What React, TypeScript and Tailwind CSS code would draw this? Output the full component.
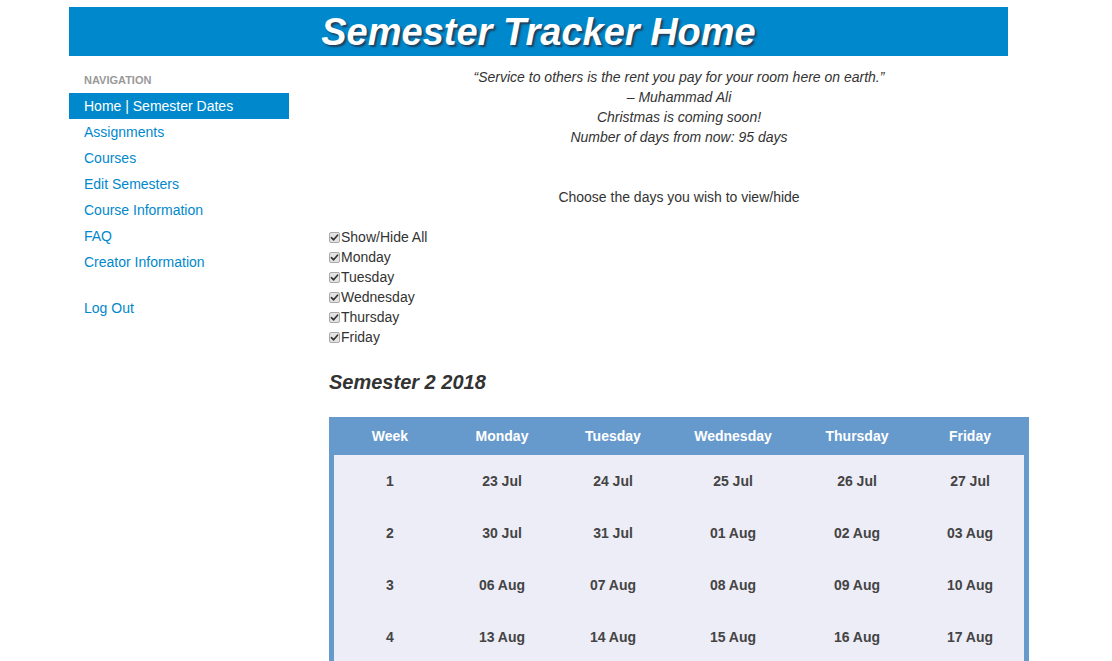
const navItems = ['Assignments', 'Courses', 'Edit Semesters', 'Course Information', 'FAQ', 'Creator Information'];

const days = ['Show/Hide All', 'Monday', 'Tuesday', 'Wednesday', 'Thursday', 'Friday'];

const weeks = [
  ['1', '23 Jul', '24 Jul', '25 Jul', '26 Jul', '27 Jul'],
  ['2', '30 Jul', '31 Jul', '01 Aug', '02 Aug', '03 Aug'],
  ['3', '06 Aug', '07 Aug', '08 Aug', '09 Aug', '10 Aug'],
  ['4', '13 Aug', '14 Aug', '15 Aug', '16 Aug', '17 Aug'],
  ['5', '20 Aug', '21 Aug', '22 Aug', '23 Aug', '24 Aug'],
];

const headers = ['Week', 'Monday', 'Tuesday', 'Wednesday', 'Thursday', 'Friday'];
const colWidths = ['w-[112px]', 'w-[112px]', 'w-[110px]', 'w-[130px]', 'w-[118px]', 'w-[108px]'];

function CheckBox() {
  return (
    <span className="inline-flex w-[11px] h-[11px] mr-px rounded-[2px] border border-[#a9a9a9] bg-[#e3e3e3] items-center justify-center shrink-0">
      <svg viewBox="0 0 10 10" className="w-[9px] h-[9px]">
        <path d="M1.6 5.2 L4 7.6 L8.4 2.4" fill="none" stroke="#333" strokeWidth="1.8" strokeLinecap="round" strokeLinejoin="round" />
      </svg>
    </span>
  );
}

export default function App() {
  return (
    <div className="min-h-screen bg-white text-[#333] text-[14px] leading-5 font-['Liberation_Sans',Arial,sans-serif]">
      <div className="ml-[69px] w-[960px] pt-[7px]">
        <div className="w-[939px] h-[49px] bg-[#0088cc] flex items-center justify-center">
          <h1 className="text-white text-[38px] font-bold italic leading-none pt-[1px] [text-shadow:2px_2px_2px_#1f3f5c]">
            Semester Tracker Home
          </h1>
        </div>

        <div className="flex mt-[11px]">
          <aside className="w-[220px] shrink-0 pt-[4px]">
            <div className="pl-[15px] text-[11px] font-bold text-[#999] leading-[18px] uppercase">Navigation</div>
            <ul className="mt-[4px]">
              <li className="h-[26px] pl-[15px] bg-[#0088cc] text-white leading-[26px]">Home | Semester Dates</li>
              {navItems.map((n) => (
                <li key={n} className="h-[26px] pl-[15px] text-[#0088cc] leading-[26px]">{n}</li>
              ))}
              <li className="h-[26px] pl-[15px] text-[#0088cc] leading-[26px] mt-[20px]">Log Out</li>
            </ul>
          </aside>

          <main className="ml-[40px] w-[700px]">
            <div className="text-center italic">
              <p>“Service to others is the rent you pay for your room here on earth.”</p>
              <p>– Muhammad Ali</p>
              <p>Christmas is coming soon!</p>
              <p>Number of days from now: 95 days</p>
            </div>

            <p className="text-center mt-[40px]">Choose the days you wish to view/hide</p>

            <div className="mt-[20px]">
              {days.map((d) => (
                <label key={d} className="flex items-center h-5">
                  <CheckBox />
                  <span>{d}</span>
                </label>
              ))}
            </div>

            <h2 className="mt-[20px] text-[20px] font-bold italic leading-[30px] text-[#333]">Semester 2 2018</h2>

            <div className="mt-[20px] bg-[#6699cc] px-[5px]">
              <table className="w-[690px] table-fixed border-collapse text-center font-bold">
                <thead>
                  <tr className="h-[38px] text-white">
                    {headers.map((h, i) => (
                      <th key={h} className={colWidths[i] + ' font-bold'}>{h}</th>
                    ))}
                  </tr>
                </thead>
                <tbody className="bg-[#ededf7] text-[#444]">
                  {weeks.map((w) => (
                    <tr key={w[0]} className="h-[52px]">
                      {w.map((c, i) => (
                        <td key={i}>{c}</td>
                      ))}
                    </tr>
                  ))}
                </tbody>
              </table>
            </div>
          </main>
        </div>
      </div>
    </div>
  );
}
